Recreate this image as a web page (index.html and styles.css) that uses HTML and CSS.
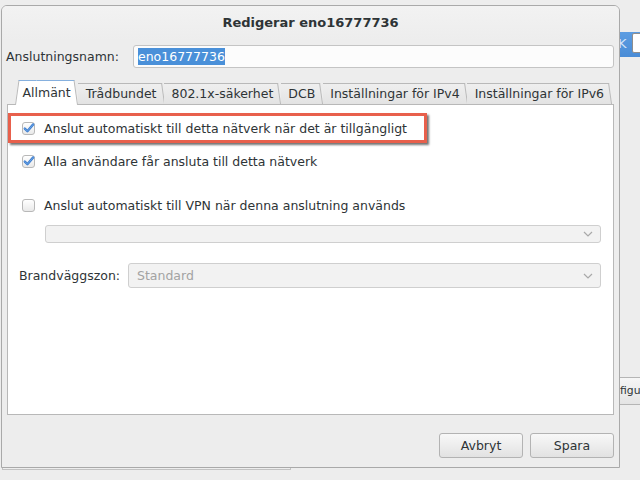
FILE: index.html
```html
<!DOCTYPE html>
<html lang="sv">
<head>
<meta charset="utf-8">
<title>Redigerar eno16777736</title>
<link rel="stylesheet" href="styles.css">
</head>
<body>
<div class="desktop">
  <div class="bg-strip"><span class="bg-strip-text">K</span><span class="bg-strip-box"></span></div>
  <div class="bg-button">figu</div>
  <div class="bg-window"></div>

  <div class="dialog">
    <div class="titlebar">Redigerar eno16777736</div>

    <div class="name-row">
      <span class="name-label">Anslutningsnamn:</span>
      <div class="entry"><span class="selected">eno16777736</span></div>
    </div>

    <div class="notebook">
      <div class="tabs">
        <div class="tab active"><span>Allmänt</span></div>
        <div class="tab"><span>Trådbundet</span></div>
        <div class="tab"><span>802.1x-säkerhet</span></div>
        <div class="tab"><span>DCB</span></div>
        <div class="tab"><span>Inställningar för IPv4</span></div>
        <div class="tab"><span>Inställningar för IPv6</span></div>
      </div>
      <div class="panel">
        <div class="check-row highlight">
          <span class="cb"><svg viewBox="0 0 13 13" width="13" height="13"><path d="M2.8 6.6 L5.4 9.2 L11.2 2.4" fill="none" stroke="#3f7fcf" stroke-width="2.4" stroke-linecap="round" stroke-linejoin="round"/><path d="M2.8 6.6 L5.4 9.2 L11.2 2.4" fill="none" stroke="#6aa3e6" stroke-width="1" stroke-linecap="round" stroke-linejoin="round"/></svg></span>
          <span class="check-label">Anslut automatiskt till detta nätverk när det är tillgängligt</span>
        </div>
        <div class="check-row plain second">
          <span class="cb"><svg viewBox="0 0 13 13" width="13" height="13"><path d="M2.8 6.6 L5.4 9.2 L11.2 2.4" fill="none" stroke="#3f7fcf" stroke-width="2.4" stroke-linecap="round" stroke-linejoin="round"/><path d="M2.8 6.6 L5.4 9.2 L11.2 2.4" fill="none" stroke="#6aa3e6" stroke-width="1" stroke-linecap="round" stroke-linejoin="round"/></svg></span>
          <span class="check-label">Alla användare får ansluta till detta nätverk</span>
        </div>
        <div class="check-row plain third">
          <span class="cb"></span>
          <span class="check-label">Anslut automatiskt till VPN när denna anslutning används</span>
        </div>
        <div class="combo combo-vpn">
          <span class="combo-text"></span>
          <svg class="chev" viewBox="0 0 10 6" width="10" height="6"><path d="M1 1 L5 5 L9 1" fill="none" stroke="#a9a9a9" stroke-width="1.2"/></svg>
        </div>
        <div class="zone-row">
          <span class="zone-label">Brandväggszon:</span>
          <div class="combo combo-zone">
            <span class="combo-text placeholder">Standard</span>
            <svg class="chev" viewBox="0 0 10 6" width="10" height="6"><path d="M1 1 L5 5 L9 1" fill="none" stroke="#a9a9a9" stroke-width="1.2"/></svg>
          </div>
        </div>
      </div>
    </div>

    <div class="buttons">
      <button class="btn">Avbryt</button>
      <button class="btn">Spara</button>
    </div>
  </div>
</div>
</body>
</html>
```

FILE: styles.css
```css
html, body {
  margin: 0;
  padding: 0;
}
body {
  background: #ededed;
  font-family: "DejaVu Sans", "Liberation Sans", sans-serif;
  font-size: 12.5px;
  color: #2e3436;
}
.desktop {
  position: relative;
  width: 640px;
  height: 480px;
  overflow: hidden;
  background: #ededed;
}

/* windows behind the dialog */
.bg-strip {
  position: absolute;
  left: 615px;
  top: 32px;
  width: 40px;
  height: 25px;
  background: linear-gradient(#5d9de2, #4a8cd6);
}
.bg-strip-text {
  position: absolute;
  left: 3px;
  top: 4px;
  color: #d5e5f7;
  font-size: 13px;
}
.bg-strip-box {
  position: absolute;
  left: 17px;
  top: 1px;
  width: 12px;
  height: 18px;
  background: #fff;
  border: 1px solid #8e8e8e;
  border-radius: 2px;
}
.bg-button {
  position: absolute;
  left: 618px;
  top: 377px;
  width: 22px;
  height: 26px;
  padding-left: 2px;
  box-sizing: content-box;
  line-height: 26px;
  font-size: 10.8px;
  white-space: nowrap;
  background: linear-gradient(#f6f6f6, #e4e4e4);
  border-top: 1px solid #b5b5b5;
  border-bottom: 1px solid #b5b5b5;
}
.bg-window {
  position: absolute;
  left: 2px;
  top: 300px;
  width: 289px;
  height: 170px;
  box-sizing: border-box;
  border: 1px solid #c2c2c2;
  background: #ededed;
}

/* dialog */
.dialog {
  position: absolute;
  left: 1px;
  top: 5px;
  width: 619px;
  height: 463px;
  box-sizing: border-box;
  border: 1px solid #a9a9a9;
  border-radius: 6px 6px 0 0;
  background: #ededed;
  display: flex;
  flex-direction: column;
}
.titlebar {
  height: 34px;
  line-height: 34px;
  text-align: center;
  font-weight: bold;
  font-size: 13px;
  color: #2e3436;
  border-radius: 5px 5px 0 0;
  background: linear-gradient(#f2f2f2, #ededed);
}
.name-row {
  display: flex;
  align-items: center;
  margin-top: 5px;
  padding: 0 5px 0 4px;
}
.name-label {
  width: 127px;
  flex: none;
}
.entry {
  flex: 1;
  height: 23px;
  box-sizing: border-box;
  border: 1px solid #c4c4c4;
  border-radius: 3px;
  background: #fcfcfc;
  padding: 2px 4px 0 4px;
}
.selected {
  display: inline-block;
  height: 17px;
  line-height: 17px;
  background: #4a90d9;
  color: #fff;
}

/* notebook */
.notebook {
  margin: 12px 5px 0 5px;
}
.tabs {
  display: flex;
  align-items: flex-end;
  height: 24px;
  padding-left: 8px;
  position: relative;
  z-index: 1;
}
.tab {
  position: relative;
  isolation: isolate;
  height: 21px;
  line-height: 21px;
  padding: 0 7.5px;
  white-space: nowrap;
}
.tab::before,
.tab::after {
  content: "";
  position: absolute;
  top: 0;
  bottom: 0;
  z-index: -1;
  background: linear-gradient(#efefef, #e3e3e3);
  border-top: 1px solid #b9b9b9;
  transform-origin: bottom;
}
.tab::before {
  left: 0;
  right: 40%;
}
.tab::after {
  left: 40%;
  right: 0;
  border-right: 1px solid #b9b9b9;
  transform: skewX(8deg);
}
.tab.active {
  height: 25px;
  line-height: 25px;
  margin-bottom: -1px;
}
.tab.active::before,
.tab.active::after {
  background: #fff;
  border-top: 1px solid #86b0de;
}
.tab.active::before {
  border-left: 1px solid #b9b9b9;
  transform: skewX(-8deg);
}
.panel {
  height: 311px;
  box-sizing: border-box;
  background: #fff;
  border: 1px solid #b8b8b8;
  display: flex;
  flex-direction: column;
  align-items: flex-start;
}
.check-row {
  display: flex;
  align-items: center;
  gap: 9px;
  white-space: nowrap;
}
.cb {
  width: 13px;
  height: 13px;
  box-sizing: border-box;
  border: 1px solid #b8b8b8;
  border-radius: 3px;
  background: linear-gradient(#ffffff, #e9e9e9);
  position: relative;
  flex: none;
}
.cb svg {
  position: absolute;
  left: -1px;
  top: -1px;
}
.highlight {
  margin-top: 8px;
  height: 30px;
  box-sizing: border-box;
  border: 3px solid #e8604c;
  padding: 0 17px 0 11px;
  box-shadow: 2px 2px 2px rgba(0, 0, 0, 0.55);
}
.plain {
  height: 18px;
  padding-left: 14px;
}
.second {
  margin-top: 9px;
}
.third {
  margin-top: 26px;
}
.combo {
  display: flex;
  align-items: center;
  justify-content: space-between;
  box-sizing: border-box;
  background: #f2f2f2;
  border: 1px solid #cfcfcf;
  border-radius: 3px;
  padding: 0 7px 0 8px;
}
.combo-vpn {
  align-self: stretch;
  height: 18px;
  margin: 11px 12px 0 37px;
}
.zone-row {
  align-self: stretch;
  display: flex;
  align-items: center;
  margin: 20px 12px 0 0;
  padding-left: 11px;
}
.zone-label {
  width: 109px;
  flex: none;
}
.combo-zone {
  flex: 1;
  height: 25px;
}
.placeholder {
  color: #a3a3a3;
}
.chev {
  flex: none;
}

/* buttons */
.buttons {
  display: flex;
  justify-content: flex-end;
  gap: 7px;
  margin-top: 18px;
  padding-right: 5px;
}
.btn {
  width: 84px;
  height: 25px;
  box-sizing: border-box;
  border: 1px solid #b3b3b3;
  border-radius: 3px;
  background: linear-gradient(#f8f8f8, #e2e2e2);
  font-family: "DejaVu Sans", "Liberation Sans", sans-serif;
  font-size: 12.5px;
  color: #2e3436;
  padding: 0;
}
```
